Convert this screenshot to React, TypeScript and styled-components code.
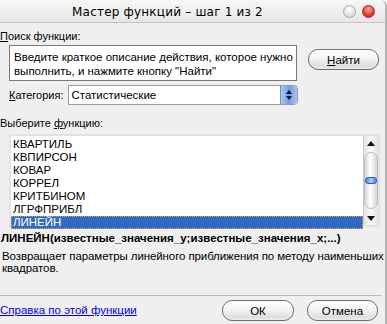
import styled, { createGlobalStyle } from "styled-components";

const GlobalStyle = createGlobalStyle`
  html, body {
    margin: 0;
    padding: 0;
    background: #ffffff;
  }
  * {
    box-sizing: border-box;
  }
`;

const functions = [
  "КВАРТИЛЬ",
  "КВПИРСОН",
  "КОВАР",
  "КОРРЕЛ",
  "КРИТБИНОМ",
  "ЛГРФПРИБЛ",
  "ЛИНЕЙН",
];

export default function App(): JSX.Element {
  return (
    <>
      <GlobalStyle />
      <Window>
        <TitleBar>
          <Title>Мастер функций – шаг 1 из 2</Title>
          <TitleButtons>
            <Circle />
            <Circle $close />
          </TitleButtons>
        </TitleBar>
        <Content>
          <Label>
            <u>П</u>оиск функции:
          </Label>
          <SearchRow>
            <SearchBox>
              Введите краткое описание действия, которое нужно выполнить, и
              нажмите кнопку "Найти"
            </SearchBox>
            <PillButton $width={71}>
              <u>Н</u>айти
            </PillButton>
          </SearchRow>
          <CategoryRow>
            <Label>
              <u>К</u>атегория:
            </Label>
            <Select>
              <SelectValue>Статистические</SelectValue>
              <SelectArrow>
                <ArrowUp $size={3} />
                <ArrowDown $size={3} />
              </SelectArrow>
            </Select>
          </CategoryRow>
          <ListLabel>
            Выберите <u>ф</u>ункцию:
          </ListLabel>
          <ListBox>
            <Items>
              {functions.map((name) => (
                <Item key={name} $selected={name === "ЛИНЕЙН"}>
                  {name}
                </Item>
              ))}
            </Items>
            <ScrollBar>
              <ScrollEnd>
                <ArrowUp $size={4} />
              </ScrollEnd>
              <Thumb>
                <Grip />
              </Thumb>
              <ScrollEnd>
                <ArrowDown $size={4} />
              </ScrollEnd>
            </ScrollBar>
          </ListBox>
          <Signature>
            ЛИНЕЙН(известные_значения_y;известные_значения_x;...)
          </Signature>
          <Description>
            Возвращает параметры линейного приближения по методу наименьших
            квадратов.
          </Description>
          <Separator />
          <Footer>
            <HelpLink href="#">Справка по этой функции</HelpLink>
            <Buttons>
              <PillButton $width={72}>ОК</PillButton>
              <PillButton $width={71}>Отмена</PillButton>
            </Buttons>
          </Footer>
        </Content>
      </Window>
    </>
  );
}

const Window = styled.div`
  width: 387px;
  height: 324px;
  background: #efefef;
  border-right: 2px solid #b4b4b4;
  border-top-right-radius: 6px;
  overflow: hidden;
  font-family: "Liberation Sans", Arial, sans-serif;
  font-size: 11px;
  color: #000;
`;

const TitleBar = styled.div`
  height: 23px;
  display: flex;
  align-items: center;
  justify-content: center;
  position: relative;
  background: linear-gradient(#f7f7f7, #e6e6e6);
  border-bottom: 1px solid #c4c4c4;
`;

const Title = styled.div`
  font-family: "DejaVu Sans", sans-serif;
  font-size: 12px;
  letter-spacing: 0.2px;
  margin-left: -50px;
  padding-top: 1px;
`;

const TitleButtons = styled.div`
  position: absolute;
  right: 10px;
  top: 5px;
  display: flex;
  gap: 6px;
`;

const Circle = styled.div<{ $close?: boolean }>`
  width: 13px;
  height: 13px;
  border-radius: 50%;
  border: 1px solid ${(p) => (p.$close ? "#9c2a20" : "#a8a8a8")};
  background: ${(p) =>
    p.$close
      ? "radial-gradient(circle at 50% 30%, #ffb0a0 0%, #e8402c 55%, #b81c10 100%)"
      : "radial-gradient(circle at 50% 30%, #ffffff 0%, #e4e4e4 60%, #c8c8c8 100%)"};
`;

const Content = styled.div`
  padding-top: 6px;
`;

const Label = styled.div`
  line-height: 14px;
  white-space: nowrap;
`;

const SearchRow = styled.div`
  display: flex;
  align-items: flex-start;
  margin-top: 2px;
  padding-left: 9px;
`;

const SearchBox = styled.div`
  width: 288px;
  height: 36px;
  background: #fff;
  border: 1px solid #7a7a7a;
  padding: 4px 0 0 4px;
  line-height: 14px;
  font-size: 11.5px;
`;

const PillButton = styled.button<{ $width: number }>`
  width: ${(p) => p.$width}px;
  height: 21px;
  margin-left: 11px;
  margin-top: 4px;
  border: 1px solid #6e6e6e;
  border-radius: 10px;
  background: linear-gradient(#ffffff 0%, #f4f4f4 45%, #dedede 85%, #ececec 100%);
  font-family: "Liberation Sans", Arial, sans-serif;
  font-size: 11.5px;
  color: #000;
  padding: 0;
`;

const CategoryRow = styled.div`
  display: flex;
  align-items: center;
  gap: 4px;
  margin-top: 4px;
  padding-left: 9px;
`;

const Select = styled.div`
  width: 230px;
  height: 20px;
  display: flex;
  background: #fff;
  border: 1px solid #9a9a9a;
  border-radius: 0 4px 4px 0;
  font-size: 11.5px;
`;

const SelectValue = styled.div`
  flex: 1;
  padding-left: 3px;
  line-height: 18px;
`;

const SelectArrow = styled.div`
  width: 17px;
  display: flex;
  flex-direction: column;
  align-items: center;
  justify-content: center;
  gap: 2px;
  border-radius: 0 3px 3px 0;
  border-left: 1px solid #6d8fc7;
  background: linear-gradient(to right, #a9c7f4, #6e9ee6 50%, #a4c4f2);
`;

const ArrowUp = styled.div<{ $size: number }>`
  width: 0;
  height: 0;
  border-left: ${(p) => p.$size}px solid transparent;
  border-right: ${(p) => p.$size}px solid transparent;
  border-bottom: ${(p) => p.$size + 1}px solid #111;
`;

const ArrowDown = styled.div<{ $size: number }>`
  width: 0;
  height: 0;
  border-left: ${(p) => p.$size}px solid transparent;
  border-right: ${(p) => p.$size}px solid transparent;
  border-top: ${(p) => p.$size + 1}px solid #111;
`;

const ListLabel = styled.div`
  line-height: 14px;
  margin-top: 11px;
`;

const ListBox = styled.div`
  margin: 4px 0 0 9px;
  width: 371px;
  height: 93px;
  display: flex;
  background: #fff;
  border: 2px solid #e2e2e2;
`;

const Items = styled.div`
  flex: 1;
  padding-top: 2px;
  font-size: 11.5px;
`;

const Item = styled.div<{ $selected?: boolean }>`
  height: 13px;
  line-height: 13px;
  padding-left: 2px;
  color: ${(p) => (p.$selected ? "#fff" : "#000")};
  background: ${(p) => (p.$selected ? "#316ac5" : "transparent")};
  outline: ${(p) => (p.$selected ? "1px dotted #e8a040" : "none")};
  outline-offset: -1px;
`;

const ScrollBar = styled.div`
  width: 15px;
  display: flex;
  flex-direction: column;
  background: linear-gradient(to right, #e4e4e4, #f8f8f8 50%, #e4e4e4);
  border-left: 1px solid #cacaca;
`;

const ScrollEnd = styled.div`
  height: 14px;
  display: flex;
  align-items: center;
  justify-content: center;
`;

const Thumb = styled.div`
  flex: 1;
  margin: 2px 0;
  border: 1px solid #bcbcbc;
  border-radius: 7px;
  display: flex;
  align-items: center;
  justify-content: center;
  background: linear-gradient(to right, #d8d8d8, #ffffff 45%, #d4d4d4);
`;

const Grip = styled.div`
  width: 13px;
  height: 7px;
  border-radius: 3px;
  border: 1px solid #2a5cc4;
  background: linear-gradient(to right, #4a86e8, #a8d0ff 50%, #4a86e8);
`;

const Signature = styled.div`
  font-weight: bold;
  font-size: 11.5px;
  margin-top: 4px;
  padding-left: 1px;
  line-height: 14px;
  white-space: nowrap;
`;

const Description = styled.div`
  margin-top: 5px;
  padding-left: 2px;
  line-height: 12px;
  font-size: 11.5px;
  letter-spacing: -0.1px;
`;

const Separator = styled.div`
  margin-top: 21px;
  width: 381px;
  height: 1px;
  background: #b8b8b8;
`;

const Footer = styled.div`
  display: flex;
  align-items: flex-start;
  justify-content: space-between;
  padding-right: 7px;
`;

const HelpLink = styled.a`
  color: #0000e8;
  text-decoration: underline;
  margin-top: 7px;
  line-height: 14px;
  font-size: 11.5px;
`;

const Buttons = styled.div`
  display: flex;
  gap: 2px;
  & > button {
    margin-top: 4px;
  }
`;
